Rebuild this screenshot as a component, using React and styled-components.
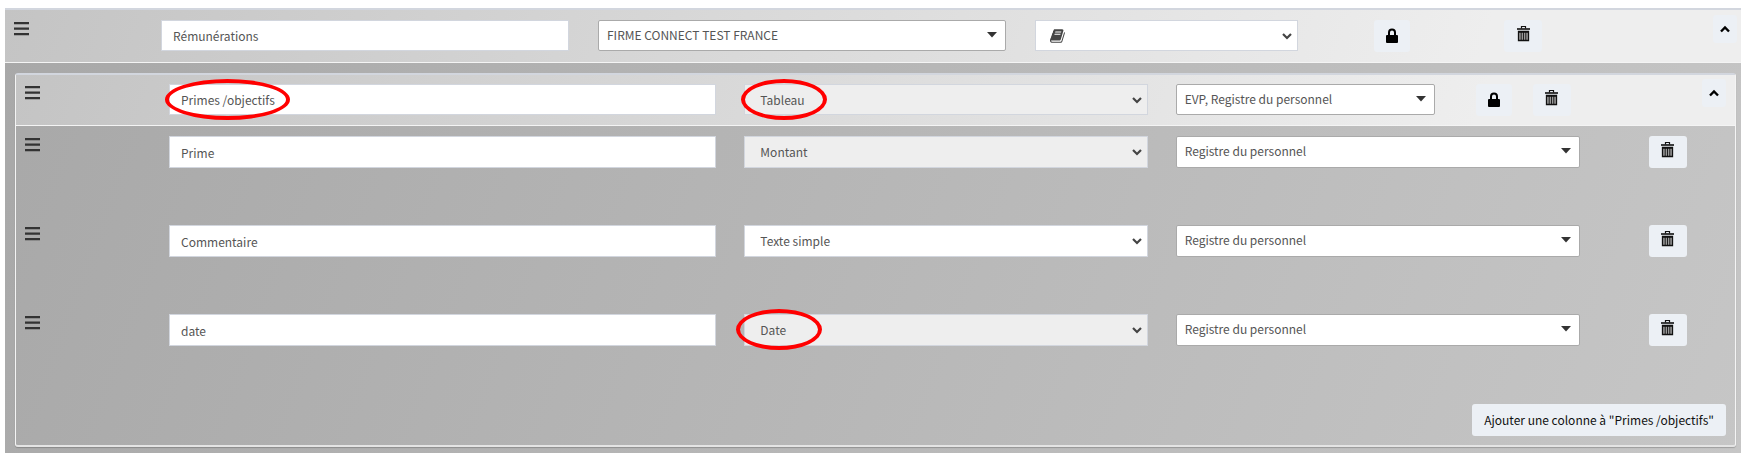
import { useState } from "react";
import styled, { createGlobalStyle } from "styled-components";

const GlobalStyle = createGlobalStyle`
    * {
        box-sizing: border-box;
    }

    body {
        margin: 0;
        background: #fff;
    }

    body, input, select, button {
        font-family: "Noto Sans CJK JP", "Noto Sans", sans-serif;
        font-size: 12px;
        line-height: 20px;
        color: #555;
    }
`;

const Page = styled.main`
    padding: 8px 1px 4px 5px;
`;

const Section = styled.section`
    border-top: 2px solid #d2d6de;
    background: linear-gradient(110deg, #a8a8a8, #c6c6c6);
`;

const Panel = styled.section`
    margin: 10px 5px 0 10px;
    border: 1px solid #f4f4f4;
    border-top: 2px solid #d2d6de;
    border-bottom: 2px solid #e4e4e4;
    border-radius: 3px;
    box-shadow: 0 1px 1px rgba(0, 0, 0, 0.2);
`;

const SectionBody = styled.div`
    padding-bottom: 6px;
    overflow: hidden;
`;

const Field = styled.div`
    position: relative;
    height: 32px;
    color: #444;
`;

const Header = styled.header`
    display: grid;
    align-items: start;
    border-bottom: 1px solid #f4f4f4;
    background: linear-gradient(110deg, #c4c4c4, #eee 85%);

    ${Field} {
        height: 31px;
    }
`;

const SectionHeader = styled(Header)`
    grid-template-columns: 118px 408fr 408fr 263fr 410fr;
    column-gap: 29px;
    padding: 10px 4px 10px 9px;
`;

const PanelHeader = styled(Header)`
    grid-template-columns: 116px 547fr 403fr 259fr 263fr;
    column-gap: 28px;
    padding: 9px 9px 9px 9px;
`;

const ColumnRow = styled.div`
    display: grid;
    grid-template-columns: 116px 547fr 403fr 404fr 118fr;
    column-gap: 28px;
    align-items: start;
    padding: 10px 9px 47px 9px;
`;

const Actions = styled.div`
    display: flex;
    align-items: flex-start;
    gap: ${(props) => props.$gap || 0}px;
    padding-left: ${(props) => props.$indent}px;
`;

const Footer = styled.footer`
    display: flex;
    justify-content: flex-end;
    padding: 11px 9px 9px;
`;

const TextInput = styled.input`
    display: block;
    width: 100%;
    height: 100%;
    padding: 4px 11px;
    border: 1px solid #d2d6de;
    border-radius: 0;
    background: #fff;
`;

const Select = styled.select`
    display: block;
    width: 100%;
    height: 100%;
    padding: 4px 30px 4px 15px;
    border: 1px solid #d2d6de;
    border-radius: 0;
    background: ${(props) => (props.disabled ? "#eee" : "#fff")};
    color: #555;
    opacity: 1;
    appearance: none;
`;

const PickerSelect = styled(Select)`
    padding: 2px 30px 4px 8px;
    border-color: #aaa;
    border-radius: 2px;
`;

const FieldIcon = styled.svg`
    position: absolute;
    top: 50%;
    right: ${(props) => props.$right};
    left: ${(props) => props.$left || "auto"};
    margin-top: -8px;
    pointer-events: none;
`;

const Marker = styled.span`
    position: absolute;
    top: -5px;
    left: ${(props) => props.$left}px;
    width: ${(props) => props.$width}px;
    height: 41px;
    border: 4px solid #f00;
    border-radius: 50%;
    pointer-events: none;
`;

const Button = styled.button`
    display: flex;
    align-items: center;
    justify-content: center;
    height: 32px;
    padding: 0 12px;
    border: 0;
    border-radius: 3px;
    background: #ecf0f5;
    color: #111;
`;

const IconButton = styled(Button)`
    width: 38px;
    padding: 0 0 4px;
`;

const LockButton = styled(Button)`
    width: 36px;
    padding: 0;
`;

const ToggleButton = styled(Button)`
    width: 24px;
    height: 28px;
    margin-top: -5px;
    margin-left: auto;
    padding: 0;
`;

const HandleButton = styled.button`
    justify-self: start;
    height: 14px;
    margin-top: 2px;
    padding: 0;
    border: 0;
    background: none;
    color: #333;
    line-height: 0;
    cursor: move;
`;

const Handle = () => (
    <HandleButton type="button" aria-label="Déplacer">
        <svg width="15" height="14" viewBox="0 0 15 14" fill="currentColor">
            <path d="M0 0h15v2.3H0zM0 5.5h15v2.3H0zM0 11h15v2.3H0z" />
        </svg>
    </HandleButton>
);

const LockIcon = () => (
    <svg width="12" height="16" viewBox="0 0 12 16">
        <path d="M3 8V4.5a3 3 0 0 1 6 0V8" fill="none" stroke="#000" strokeWidth="2" />
        <rect x="0" y="7" width="12" height="8" rx="1" fill="#000" />
    </svg>
);

const TrashIcon = () => (
    <svg width="13" height="16" viewBox="0 0 13 16" fill="none" stroke="#111">
        <path d="M4.5 2.5v-2h4v2" strokeWidth="1.2" />
        <path d="M0 3h13" strokeWidth="1.6" />
        <path d="M1 5h11v10H1z" fill="#999" stroke="none" />
        <path d="M1.5 5.5h10v9h-10z" strokeWidth="1.3" />
        <path d="M1.5 6h10" strokeWidth="1.4" />
        <path d="M4.2 6v8.5M6.5 6v8.5M8.8 6v8.5" strokeWidth="0.9" />
    </svg>
);

const ChevronUp = () => (
    <svg width="10" height="8" viewBox="0 0 10 8">
        <path d="M1 6.5l4-4 4 4" fill="none" stroke="#000" strokeWidth="2.4" />
    </svg>
);

const BookIcon = () => (
    <FieldIcon $left="15px" $right="auto" width="16" height="16" viewBox="0 0 1792 1792" fill="#444">
        <path d="M1639 478q40 57 18 129l-275 906q-19 64-76.5 107.5t-122.5 43.5h-923q-77 0-148.5-53.5t-99.5-131.5q-24-67-2-127 0-4 3-27t4-37q1-8-3-21.5t-3-19.5q2-11 8-21t16.5-23.5 16.5-23.5q23-38 45-91.5t30-91.5q3-10 .5-30t-.5-28q3-11 17-28t17-23q21-36 42-92t25-90q1-9-2.5-32t.5-28q4-13 22-30.5t22-22.5q19-26 42.5-84.5t27.5-96.5q1-8-3-25.5t-2-26.5q2-8 9-18t18-23 17-21q8-12 16.5-30.5t15-35 16-36 19.5-32 26.5-23.5 36-11.5 47.5 5.5l-1 3q38-9 51-9h761q74 0 114 56t18 130l-274 906q-36 119-71.5 153.5t-128.5 34.5h-869q-27 0-38 15-11 16-1 43 24 70 144 70h923q29 0 56-15.5t35-41.5l300-987q7-22 5-57 38 15 59 43zm-1064 2q-4 13 2 22.5t20 9.5h608q13 0 25.5-9.5t16.5-22.5l21-64q4-13-2-22.5t-20-9.5h-608q-13 0-25.5 9.5t-16.5 22.5zm-83 256q-4 13 2 22.5t20 9.5h608q13 0 25.5-9.5t16.5-22.5l21-64q4-13-2-22.5t-20-9.5h-608q-13 0-25.5 9.5t-16.5 22.5z" />
    </FieldIcon>
);

const NameField = ({ label, initial, children }) => {
    const [value, setValue] = useState(initial);

    return (
        <Field>
            <TextInput aria-label={label} value={value} onChange={(e) => setValue(e.target.value)} />
            {children}
        </Field>
    );
};

const TypeField = ({ label, value, disabled, children }) => (
    <Field>
        <Select aria-label={label} disabled={disabled} defaultValue={value}>
            <option>{value}</option>
        </Select>
        <FieldIcon $right="5px" width="12" height="16" viewBox="0 0 12 16">
            <path d="M2 6l4 4 4-4" fill="none" stroke="#444" strokeWidth="2.2" />
        </FieldIcon>
        {children}
    </Field>
);

const PickerField = ({ label, value }) => (
    <Field>
        <PickerSelect aria-label={label} defaultValue={value}>
            <option>{value}</option>
        </PickerSelect>
        <FieldIcon $right="9px" width="10" height="16" viewBox="0 0 10 16">
            <path d="M0 4h10L5 9.5z" fill="#333" />
        </FieldIcon>
    </Field>
);

const TrashButton = () => (
    <IconButton type="button" aria-label="Supprimer">
        <TrashIcon />
    </IconButton>
);

const HeaderActions = ({ gap, indent }) => (
    <Actions $gap={gap} $indent={indent}>
        <LockButton type="button" aria-label="Verrouiller">
            <LockIcon />
        </LockButton>
        <TrashButton />
        <ToggleButton type="button" aria-label="Replier">
            <ChevronUp />
        </ToggleButton>
    </Actions>
);

const columns = [
    { name: "Prime", type: "Montant", locked: true },
    { name: "Commentaire", type: "Texte simple", locked: false },
    { name: "date", type: "Date", locked: true, marked: true },
];

export default function App() {
    return (
        <Page>
            <GlobalStyle />
            <Section>
                <SectionHeader>
                    <Handle />
                    <NameField label="Rubrique" initial="Rémunérations" />
                    <PickerField label="Société" value="FIRME CONNECT TEST FRANCE" />
                    <TypeField label="Icône" value="">
                        <BookIcon />
                    </TypeField>
                    <HeaderActions gap={94} indent={47} />
                </SectionHeader>
                <SectionBody>
                    <Panel>
                        <PanelHeader>
                            <Handle />
                            <NameField label="Nom" initial="Primes /objectifs">
                                <Marker $left={-4} $width={125} />
                            </NameField>
                            <TypeField label="Type" value="Tableau" disabled>
                                <Marker $left={-3} $width={86} />
                            </TypeField>
                            <PickerField label="Affichage" value="EVP, Registre du personnel" />
                            <HeaderActions gap={21} indent={13} />
                        </PanelHeader>
                        {columns.map((column) => (
                            <ColumnRow key={column.name}>
                                <Handle />
                                <NameField label="Nom de la colonne" initial={column.name} />
                                <TypeField label="Type de la colonne" value={column.type} disabled={column.locked}>
                                    {column.marked && <Marker $left={-8} $width={86} />}
                                </TypeField>
                                <PickerField label="Affichage de la colonne" value="Registre du personnel" />
                                <Actions $indent={41}>
                                    <TrashButton />
                                </Actions>
                            </ColumnRow>
                        ))}
                        <Footer>
                            <Button type="button">Ajouter une colonne à "Primes /objectifs"</Button>
                        </Footer>
                    </Panel>
                </SectionBody>
            </Section>
        </Page>
    );
}
